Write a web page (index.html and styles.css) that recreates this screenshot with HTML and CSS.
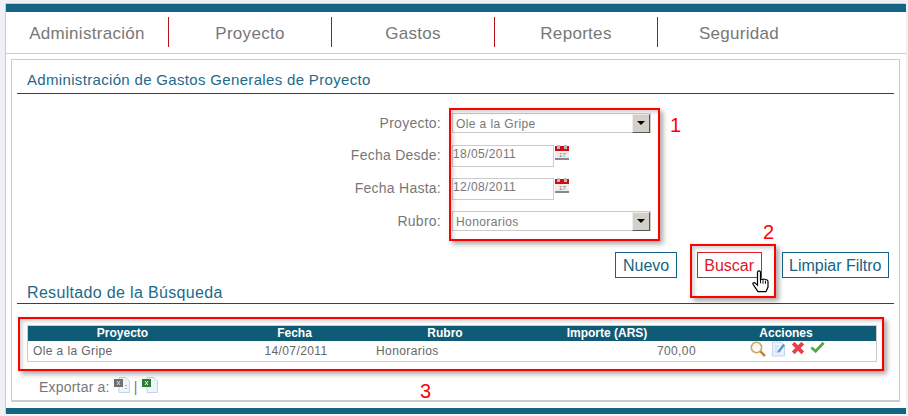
FILE: index.html
```html
<!DOCTYPE html>
<html lang="es">
<head>
  <meta charset="UTF-8" />
  <title>Gastos Generales</title>
  <link rel="stylesheet" href="styles.css">
</head>
<body>
  <div class="page">
    <div class="top-bar"></div>
    <ul class="nav">
      <li>Administración</li>
      <li>Proyecto</li>
      <li>Gastos</li>
      <li>Reportes</li>
      <li>Seguridad</li>
    </ul>
    <div class="panel">
      <h2 class="section-title">Administración de Gastos Generales de Proyecto</h2>

      <div class="filter">
        <label>Proyecto:</label>
        <div class="select"><span>Ole a la Gripe</span><i class="arrow"></i></div>
        <label>Fecha Desde:</label>
        <div class="date-field">
          <div class="date">18/05/2011</div>
          <svg class="cal" viewBox="0 0 14 15" width="14" height="15"><rect x="0" y="1" width="14" height="14" fill="#eee"/><rect x="0" y="1" width="14" height="5" fill="#d20a12"/><rect x="2" y="0" width="3" height="4" fill="#bbb"/><rect x="9" y="0" width="3" height="4" fill="#bbb"/><rect x="0" y="13" width="14" height="2" fill="#888"/><text x="4" y="12" class="cal-num">17</text></svg>
        </div>
        <label>Fecha Hasta:</label>
        <div class="date-field">
          <div class="date">12/08/2011</div>
          <svg class="cal" viewBox="0 0 14 15" width="14" height="15"><rect x="0" y="1" width="14" height="14" fill="#eee"/><rect x="0" y="1" width="14" height="5" fill="#d20a12"/><rect x="2" y="0" width="3" height="4" fill="#bbb"/><rect x="9" y="0" width="3" height="4" fill="#bbb"/><rect x="0" y="13" width="14" height="2" fill="#888"/><text x="4" y="12" class="cal-num">17</text></svg>
        </div>
        <label>Rubro:</label>
        <div class="select"><span>Honorarios</span><i class="arrow"></i></div>
      </div>

      <div class="buttons">
        <a class="btn">Nuevo</a>
        <a class="btn btn-hover">Buscar</a>
        <a class="btn">Limpiar Filtro</a>
      </div>

      <h2 class="section-title result-title">Resultado de la Búsqueda</h2>

      <div class="grid">
        <div class="grid-head">
          <span>Proyecto</span>
          <span>Fecha</span>
          <span>Rubro</span>
          <span>Importe (ARS)</span>
          <span>Acciones</span>
        </div>
        <div class="grid-row">
          <span>Ole a la Gripe</span>
          <span class="center">14/07/2011</span>
          <span>Honorarios</span>
          <span class="right">700,00</span>
          <span class="actions">
            <svg viewBox="0 0 16 16" width="16" height="16"><circle cx="6.500" cy="6.500" r="5.200" fill="#fbfaf2" stroke="#cfa468" stroke-width="1.600"/><path d="M10.500 10.500l4.500 4.500" stroke="#b98646" stroke-width="2.600"/></svg>
            <svg viewBox="0 0 16 16" width="15" height="16"><path d="M1.500.5h9l4 4v11h-13z" fill="#eaf3fc" stroke="#bcd3ea"/><path d="M4 5h4M4 8h3M4 11h6" stroke="#b9cbdd"/><path d="M7.500 9.500l5.500-7 2 1.500-5.500 7-2.500 1z" fill="#5a8fd0"/></svg>
            <svg viewBox="0 0 14 14" width="14" height="14"><path d="M2.200 2.200l9.600 9.600M11.800 2.200l-9.600 9.600" stroke="#ea3f4a" stroke-width="3.800"/></svg>
            <svg viewBox="0 0 16 12" width="15" height="12"><path d="M1.500 6.500l4.500 4 8.500-9" fill="none" stroke="#55a548" stroke-width="3"/></svg>
          </span>
        </div>
      </div>

      <div class="export">
        <span class="export-label">Exportar a:</span>
        <svg viewBox="0 0 16 16" width="16" height="16"><path d="M5 .5h7l3.500 3.500v11.500h-10.500z" fill="#eef4fb" stroke="#c2d5e8"/><rect x="0" y="2" width="9" height="8" fill="#707070"/><path d="M3 4l3 4M6 4l-3 4" stroke="#ddd"/><path d="M12 8v1M12 11v1" stroke="#666"/></svg>
        <span class="pipe">|</span>
        <svg viewBox="0 0 16 16" width="16" height="16"><path d="M5 .5h7l3.500 3.500v11.500h-10.500z" fill="#eef4fb" stroke="#c2d5e8"/><rect x="0" y="2" width="9" height="8" fill="#2f7d35"/><path d="M3 4l3 4M6 4l-3 4" stroke="#dfd"/></svg>
      </div>
    </div>
    <div class="bottom-bar"></div>
  </div>

  <!-- annotations drawn over the screenshot -->
  <div class="mark mark-1"></div>
  <div class="mark mark-2"></div>
  <div class="mark mark-3"></div>
  <span class="num num-1">1</span>
  <span class="num num-2">2</span>
  <span class="num num-3">3</span>
  <svg class="hand" viewBox="0 0 17 25" width="17" height="23" preserveAspectRatio="none"><path d="M5.500 2.500c0-2 3-2 3 0v8c2-1 7-.5 7.500 1.500v6.500l-2 5h-8l-5-8c-.5-1.500 1-2.500 2.500-1l2 2z" fill="#fff" stroke="#000" stroke-width="1.200"/><path d="M8.500 10.500v4M11 11v4M13.500 11.500v3.500" stroke="#000"/></svg>
</body>
</html>
```

FILE: styles.css
```css
html, body {
  margin: 0;
  height: 416px;
  overflow: hidden;
}
body {
  background-color: #eef0f3;
  font-family: "Liberation Sans", Arial, sans-serif;
  color: #777;
  position: relative;
}
.page {
  margin: 4px 2px 0 6px;
  height: 410px;
  background-color: #fff;
  display: flex;
  flex-direction: column;
  box-shadow: -1px -1px 0 #ccc;
}
.top-bar {
  height: 8px;
  flex: none;
  background-color: #156484;
}
.bottom-bar {
  height: 6px;
  flex: none;
  margin-top: 6px;
  background-color: #156484;
}

/* menu */
.nav {
  list-style: none;
  margin: 0;
  padding: 5px 0 6px;
  height: 30px;
  flex: none;
  display: flex;
  border-bottom: 1px solid #ccc;
}
.nav li {
  width: 162px;
  border-right: 1px solid #b5121b;
  text-align: center;
  font-size: 17px;
  letter-spacing: 0.3px;
  line-height: 33px;
}
.nav li:last-child {
  border-right: none;
}

.panel {
  flex: 1;
  margin: 5px 6px 0 5px;
  padding: 0 5px;
  border: 1px solid #ccc;
  border-bottom-width: 2px;
}
.section-title {
  margin: 0;
  height: 34px;
  padding-left: 10px;
  box-sizing: border-box;
  font-size: 15px;
  letter-spacing: 0.33px;
  font-weight: normal;
  line-height: 39px;
  color: #1d6a8a;
  border-bottom: 1px solid #a3141c;
}

/* filter */
.filter {
  margin-top: 19px;
  display: grid;
  grid-template-columns: 424px 1fr;
  grid-template-rows: 21px 22px 22px 21px;
  row-gap: 11px;
  column-gap: 11px;
  font-size: 14px;
  letter-spacing: 0.25px;
}
.filter label {
  text-align: right;
  line-height: 20px;
}
.select {
  width: 199px;
  height: 20px;
  border: 1px solid #ccc;
  display: flex;
  justify-content: space-between;
  font-size: 12px;
  letter-spacing: 0.4px;
  line-height: 20px;
  padding-left: 3px;
  box-sizing: border-box;
}
.arrow {
  width: 16px;
  height: 17px;
  background-color: #d4d0c8;
  border: 1px solid;
  border-color: #eee #555 #555 #eee;
  position: relative;
}
.arrow::after {
  content: "";
  position: absolute;
  left: 4px;
  top: 6px;
  border: 4px solid transparent;
  border-top-color: #000;
  border-bottom: none;
}
.date-field {
  display: flex;
  align-items: flex-start;
  gap: 1px;
}
.date {
  width: 102px;
  height: 22px;
  box-sizing: border-box;
  border: 1px solid #ccc;
  font-size: 12px;
  letter-spacing: 0.4px;
  line-height: 16px;
}
.cal-num {
  font-size: 6px;
  fill: #777;
}

/* buttons */
.buttons {
  margin-top: 20px;
  padding-right: 5px;
  display: flex;
  justify-content: flex-end;
  gap: 20px;
}
.btn {
  height: 26px;
  box-sizing: border-box;
  padding: 0 6.5px;
  border: 1px solid #156484;
  color: #156484;
  font-size: 16px;
  line-height: 25px;
}
.btn-hover {
  border-color: #d9202a;
  color: #d9202a;
}
.result-title {
  margin-top: 3px;
  height: 23px;
  font-size: 16px;
  line-height: 24px;
}

/* results */
.grid {
  margin: 21px 17px 0 10px;
  font-size: 12px;
  border: 1px solid #ccc;
}
.grid-head, .grid-row {
  display: grid;
  grid-template-columns: 189px 155px 146px 178px 1fr;
}
.grid-head {
  height: 15px;
  background-color: #0f5a75;
  color: #fff;
  font-weight: bold;
  text-align: center;
  line-height: 15px;
}
.grid-row {
  height: 20px;
  line-height: 21px;
  color: #666;
  letter-spacing: 0.4px;
}
.grid-row span:first-child {
  padding-left: 5px;
}
.grid-row span:nth-child(3) {
  padding-left: 4px;
}
.center {
  text-align: center;
  padding-left: 3px;
}
.right {
  text-align: right;
}
.actions {
  display: flex;
  justify-content: center;
  align-items: flex-start;
  gap: 5px;
  padding-left: 2px;
}
.export {
  margin: 15px 0 0 22px;
  display: flex;
  align-items: flex-start;
  gap: 4px;
  font-size: 14px;
  letter-spacing: 0.2px;
}
.export-label, .pipe {
  padding-top: 2px;
}

/* annotations */
.mark {
  position: absolute;
  border: 2px solid #f00;
  box-shadow: 3px 3px 5px rgba(0, 0, 0, 0.35), inset 2px 2px 4px rgba(0, 0, 0, 0.2);
  box-sizing: border-box;
}
.mark-1 {
  left: 449px;
  top: 108px;
  width: 211px;
  height: 133px;
}
.mark-2 {
  left: 690px;
  top: 244px;
  width: 86px;
  height: 54px;
}
.mark-3 {
  left: 18px;
  top: 317px;
  width: 866px;
  height: 54px;
}
.num {
  position: absolute;
  color: #f00;
  font-size: 20px;
  line-height: 20px;
}
.num-1 {
  left: 670px;
  top: 115px;
}
.num-2 {
  left: 763px;
  top: 222px;
}
.num-3 {
  left: 420px;
  top: 381px;
}
.hand {
  position: absolute;
  left: 752px;
  top: 270px;
}
```
